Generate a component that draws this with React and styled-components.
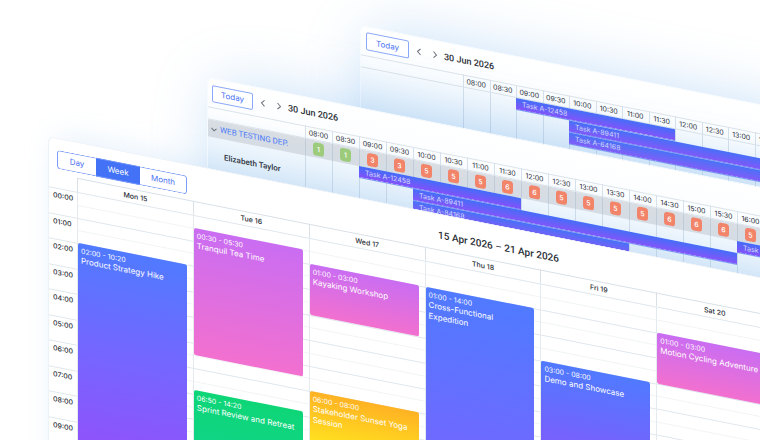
import React from 'react';
import styled, { createGlobalStyle } from 'styled-components';

const GlobalStyle = createGlobalStyle`
  *, *::before, *::after { box-sizing: border-box; }
  body { margin: 0; background: #fff; overflow: hidden; }
  button { font: inherit; }
`;

const Scene = styled.main`
  display: grid;
  height: 100vh;
  overflow: hidden;
  background: #fff;
  font-family: Inter, "Liberation Sans", sans-serif;
  color: #2a2e36;
`;

const Panel = styled.section`
  grid-area: 1 / 1;
  align-self: start;
  transform: skewY(11.2deg);
  transform-origin: 0 0;
  border-radius: 6px 0 0 0;
`;

const SchedulerPanel = styled(Panel)`
  margin: ${p => p.$margin};
  border: 1px solid #f6fbff;
  border-width: 1px 0 0 1px;
  background: linear-gradient(#fff 0, #fbfdff 34px, #cbe2f6 130px);
  box-shadow: 14px 8px 60px 4px rgba(110, 175, 235, 0.42);
`;

const SchedulerBar = styled.header`
  display: flex;
  align-items: center;
  height: 28px;
  padding-left: ${p => (p.$compact ? 4 : 5)}px;
`;

const TodayButton = styled.button`
  width: ${p => (p.$compact ? 41 : 43)}px;
  height: ${p => (p.$compact ? 17 : 18)}px;
  padding: 0;
  border: 1px solid #8ba7f9;
  border-radius: 2px;
  background: #fff;
  color: #4c73f5;
  font-size: 8px;
`;

const ArrowButton = styled.button`
  display: flex;
  justify-content: center;
  width: 16px;
  padding: 0;
  border: 0;
  background: none;
  color: #6a707b;
`;

const Arrows = styled.div`
  display: flex;
  margin: 0 1px 0 2px;
`;

const BarTitle = styled.h2`
  margin: 0;
  font-family: Roboto, sans-serif;
  font-size: 9px;
  font-weight: 500;
  white-space: nowrap;
`;

const Timeline = styled.div`
  display: grid;
  grid-template-columns: ${p => p.$label}px repeat(${p => p.$slots}, minmax(0, 1fr));
  grid-template-rows: 13px ${p => (p.$group ? '17px' : '')} repeat(8, 12px);
`;

const SlotLine = styled.div`
  grid-column: ${p => p.$col};
  grid-row: 1 / -1;
  border-left: 1px solid rgba(150, 175, 200, 0.36);
`;

const HeadCell = styled.div`
  grid-row: 1;
  grid-column: ${p => p.$col};
  border-top: 1px solid #dbe3ea;
  border-bottom: 1px solid #dbe3ea;
  font-size: 7px;
  line-height: 11px;
  text-align: center;
`;

const GroupBand = styled.div`
  grid-row: 2;
  grid-column: 1 / -1;
  background: rgba(200, 206, 214, 0.68);
`;

const GroupToggle = styled.button`
  grid-row: 2;
  grid-column: 1;
  display: flex;
  align-items: center;
  gap: 2px;
  padding: 0 0 0 2px;
  border: 0;
  background: none;
  color: #4c7bf8;
  font-family: Roboto, sans-serif;
  font-size: 8px;
  white-space: nowrap;
  svg { color: #6a707b; }
`;

const Badge = styled.span`
  grid-row: 2;
  grid-column: ${p => p.$col};
  place-self: center;
  width: 11px;
  border-radius: 3px;
  background: ${p => (p.$low ? '#9ccb7b' : '#f18469')};
  color: #fff;
  font-size: 7px;
  font-weight: 500;
  line-height: 13px;
  text-align: center;
`;

const Person = styled.div`
  grid-column: 1;
  grid-row: 3 / span 3;
  align-self: center;
  padding-left: 16px;
  font-family: Roboto, sans-serif;
  font-size: 8px;
  font-weight: 500;
`;

const Task = styled.div`
  grid-row: ${p => p.$row};
  grid-column: ${p => p.$from} / ${p => p.$to};
  margin-bottom: 1px;
  padding-left: 6px;
  background: linear-gradient(#446df8, #8350fb);
  box-shadow: 0 1px 0 #7f9df5;
  color: #d9deff;
  font-size: 7px;
  line-height: 11px;
  white-space: nowrap;
`;

const Calendar = styled(Panel)`
  margin: 136px -128px 0 48px;
  border: 1px solid #eef3f8;
  border-width: 1px 0 0 1px;
  background: #fff;
  box-shadow: 10px 0 30px 2px rgba(120, 180, 235, 0.2);
`;

const CalendarBar = styled.header`
  display: grid;
  grid-template-columns: 1fr auto 1fr;
  align-items: center;
  height: 35px;
  margin-right: -60px;
  padding: 5px 8px 0 8px;
`;

const CalendarTitle = styled.h1`
  margin: 0;
  font-family: Roboto, sans-serif;
  font-size: 10px;
  font-weight: 500;
`;

const ViewSwitch = styled.div`
  display: grid;
  grid-template-columns: 39px 44px 47px;
  width: 130px;
  height: 19px;
  border-radius: 3px;
  overflow: hidden;
`;

const ViewButton = styled.button`
  padding: 0;
  border: 1px solid #7c9cf9;
  border-width: ${p => (p.$on ? '1px 0' : '1px')};
  background: ${p => (p.$on ? '#4372f6' : '#fff')};
  color: ${p => (p.$on ? '#fff' : '#4c73f5')};
  font-size: 8px;
  &:first-child { border-right: 0; border-radius: 3px 0 0 3px; }
  &:last-child { border-left: 0; border-radius: 0 3px 3px 0; }
`;

const Week = styled.div`
  display: grid;
  grid-template-columns: 28px repeat(7, minmax(0, 1fr));
  grid-template-rows: 14px 613px;
`;

const DayHead = styled.div`
  border-top: 1px solid #d8e1e8;
  border-left: 1px solid #d8e1e8;
  font-size: 7px;
  font-weight: 500;
  line-height: 13px;
  text-align: center;
`;

const Hours = styled.div`
  display: grid;
  grid-template-rows: repeat(24, minmax(0, 1fr));
`;

const Hour = styled.div`
  border-top: 1px solid #dfe7ed;
  padding-left: 4px;
  font-size: 7px;
  font-weight: 500;
  line-height: 14px;
`;

const Day = styled.div`
  display: grid;
  grid-template-columns: minmax(0, 1fr);
  grid-template-rows: repeat(144, minmax(0, 1fr));
  border-left: 1px solid #e4eaee;
`;

const HalfHour = styled.div`
  grid-column: 1;
  grid-row: ${p => p.$row} / span 3;
  border-top: 1px solid ${p => (p.$full ? '#dfe7ed' : '#f1f4f6')};
`;

const fills = {
  blue: '#507aff, #7268ff 45%, #9250fa',
  long: '#507aff, #7268ff 50%, #9250fa',
  short: '#507aff, #9250fa',
  pink: '#ca6df2, #f270cf',
  green: '#0ed677, #14d0ab',
  amber: '#ffb223, #ffe21f',
};

const Event = styled.article`
  grid-column: 1;
  grid-row: ${p => p.$from} / ${p => p.$to};
  z-index: 1;
  margin-right: 6px;
  padding: 3px 5px 0 3px;
  border-radius: 2px;
  background: linear-gradient(${p => fills[p.$fill]});
  color: #fff;
`;

const EventTime = styled.div`
  font-size: 7px;
  line-height: 9px;
`;

const EventName = styled.div`
  font-size: 8px;
  line-height: 11px;
`;

const Chevron = ({ d }) => (
  <svg width="8" height="8" viewBox="0 0 8 8" fill="none" stroke="currentColor" aria-hidden="true">
    <path d={d} />
  </svg>
);

const slotLabels = count =>
  Array.from({ length: count }, (_, i) =>
    `${String(8 + Math.floor(i / 2)).padStart(2, '0')}:${i % 2 ? '30' : '00'}`);

const loads = [1, 1, 3, 3, 5, 5, 5, 6, 6, 5, 5, 5, 5, 6, 6, 6, 5];

function Scheduler({ margin, label, slots, group, tasks }) {
  const first = group ? 3 : 2;
  return (
    <SchedulerPanel $margin={margin}>
      <SchedulerBar $compact={group}>
        <TodayButton $compact={group}>Today</TodayButton>
        <Arrows>
          <ArrowButton aria-label="Previous day"><Chevron d="M5.500 1 2.500 4 5.500 7" /></ArrowButton>
          <ArrowButton aria-label="Next day"><Chevron d="M2.500 1 5.500 4 2.500 7" /></ArrowButton>
        </Arrows>
        <BarTitle>30 Jun 2026</BarTitle>
      </SchedulerBar>
      <Timeline $label={label} $slots={slots} $group={group}>
        {group && <GroupBand />}
        <HeadCell $col={1} />
        {slotLabels(slots).map((t, i) => (
          <React.Fragment key={t}>
            <SlotLine $col={i + 2} />
            <HeadCell $col={i + 2}>{t}</HeadCell>
            {group && <Badge $col={i + 2} $low={loads[i] < 3}>{loads[i]}</Badge>}
          </React.Fragment>
        ))}
        {group && (
          <>
            <GroupToggle aria-expanded="true"><Chevron d="M1.500 3 4 5.500 6.500 3" />WEB TESTING DEP.</GroupToggle>
            <Person>Elizabeth Taylor</Person>
          </>
        )}
        {tasks.map(([name, row, from, to]) => (
          <Task key={name + from} $row={first + row} $from={from + 2} $to={to + 2}>{name}</Task>
        ))}
      </Timeline>
    </SchedulerPanel>
  );
}

const days = [
  ['Mon 15', [['02:00', '10:20', 'Product Strategy Hike', 'blue']]],
  ['Tue 16', [
    ['00:30', '05:30', 'Tranquil Tea Time', 'pink'],
    ['06:50', '14:20', 'Sprint Review and Retreat', 'green'],
  ]],
  ['Wed 17', [
    ['01:00', '03:00', 'Kayaking Workshop', 'pink'],
    ['06:00', '08:00', 'Stakeholder Sunset Yoga Session', 'amber'],
  ]],
  ['Thu 18', [['01:00', '14:00', 'Cross-Functional Expedition', 'long']]],
  ['Fri 19', [['03:00', '08:00', 'Demo and Showcase', 'short']]],
  ['Sat 20', [['01:00', '03:00', 'Motion Cycling Adventure', 'pink']]],
  ['Sun 21', []],
];

const toRow = time => {
  const [h, m] = time.split(':').map(Number);
  return h * 6 + m / 10 + 1;
};

export default function App() {
  return (
    <Scene>
      <GlobalStyle />
      <Scheduler
        margin="25px -21px 0 360px"
        label={102}
        slots={12}
        tasks={[['Task A-12458', 0, 2, 8], ['Task A-89411', 1, 4, 12], ['Task A-64168', 2, 4, 12]]}
      />
      <Scheduler
        margin="77px -4px 0 207px"
        label={97}
        slots={17}
        group
        tasks={[
          ['Task A-12458', 0, 2, 8],
          ['Task A-89411', 1, 4, 16],
          ['Task A-84168', 2, 4, 12],
          ['Task A-', 0, 16, 17],
        ]}
      />
      <Calendar>
        <CalendarBar>
          <ViewSwitch role="group" aria-label="View">
            <ViewButton>Day</ViewButton>
            <ViewButton $on aria-pressed="true">Week</ViewButton>
            <ViewButton>Month</ViewButton>
          </ViewSwitch>
          <CalendarTitle>15 Apr 2026 – 21 Apr 2026</CalendarTitle>
        </CalendarBar>
        <Week>
          <div />
          {days.map(([name]) => <DayHead key={name}>{name}</DayHead>)}
          <Hours>
            {Array.from({ length: 24 }, (_, h) => (
              <Hour key={h}>{String(h).padStart(2, '0')}:00</Hour>
            ))}
          </Hours>
          {days.map(([name, events]) => (
            <Day key={name}>
              {Array.from({ length: 48 }, (_, i) => (
                <HalfHour key={i} $row={i * 3 + 1} $full={i % 2 === 0} />
              ))}
              {events.map(([start, end, title, fill]) => (
                <Event key={title} $from={toRow(start)} $to={toRow(end)} $fill={fill}>
                  <EventTime>{start} - {end}</EventTime>
                  <EventName>{title}</EventName>
                </Event>
              ))}
            </Day>
          ))}
        </Week>
      </Calendar>
    </Scene>
  );
}
